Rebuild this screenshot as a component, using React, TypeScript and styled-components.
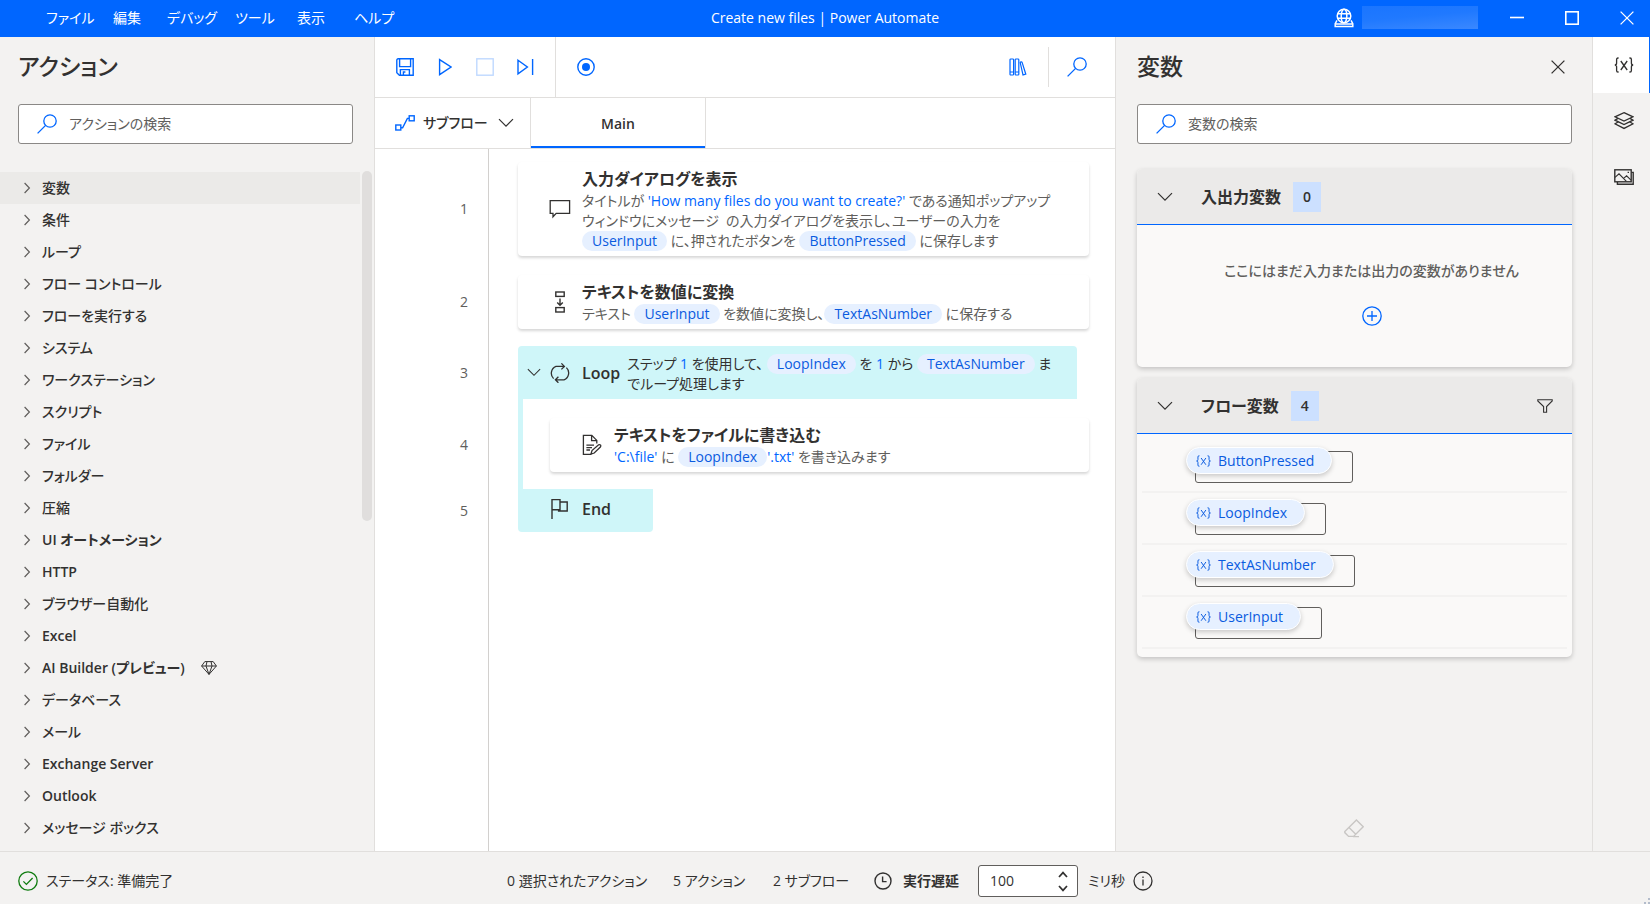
import React from "react";
import styled, { createGlobalStyle } from "styled-components";

const c = {
  blue: "#0066ff",
  panel: "#f3f2f1",
  line: "#e1dfdd",
  text: "#323130",
  sub: "#605e5c",
  pill: "#e6f0ff",
  loop: "#cff6f9",
};

const Global = createGlobalStyle`
  *, *::before, *::after { box-sizing: border-box; }
  body {
    margin: 0;
    color: ${c.text};
    background: ${c.panel};
    font-family: "Open Sans", "Noto Sans CJK JP", sans-serif;
    font-size: 14px;
    line-height: 20px;
    font-feature-settings: "palt";
  }
  button, input {
    font: inherit;
    font-feature-settings: inherit;
    color: inherit;
    margin: 0;
    padding: 0;
    border: 0;
    background: none;
  }
  svg { display: block; flex: none; }
  h1, h2, h3, p, ul, ol { margin: 0; padding: 0; font: inherit; list-style: none; }
`;

/* ---------- icons ---------- */

type IconProps = { size?: number; w?: number; h?: number; box?: string; stroke?: string; sw?: number; children: React.ReactNode };
const Icon = ({ size = 20, w, h, box, stroke = "currentColor", sw = 1.4, children }: IconProps) => (
  <svg
    width={w ?? size}
    height={h ?? size}
    viewBox={box ?? `0 0 ${w ?? size} ${h ?? size}`}
    fill="none"
    stroke={stroke}
    strokeWidth={sw}
    aria-hidden="true"
  >
    {children}
  </svg>
);

const SearchIcon = () => (
  <Icon size={20} stroke={c.blue} sw={1.3}>
    <circle cx="13" cy="7" r="6.2" />
    <path d="M8.6 11.4 0.6 19.4" />
  </Icon>
);
const ChevronDown = ({ w = 16 }: { w?: number }) => (
  <Icon w={w} h={w / 2 + 2} box="0 0 16 10" sw={1.2}>
    <path d="M1 1.2 8 8.2 15 1.2" />
  </Icon>
);
const ChevronRight = () => (
  <Icon w={8} h={12} stroke={c.sub} sw={1.2}>
    <path d="M1.6 1 6.4 6 1.6 11" />
  </Icon>
);
const SaveIcon = () => (
  <Icon size={18}>
    <path d="M0.8 2.2Q0.8 0.8 2.2 0.8H17.2V17.2H3.4L0.8 14.8Z" />
    <path d="M3.6 1V8.6H14.6V1M4.4 17V11.6H13.4V17M7.4 17V14H9.4" />
  </Icon>
);
const PlayIcon = () => (
  <Icon w={14} h={18}>
    <path d="M1.6 1.6 13 9 1.6 16.6Z" />
  </Icon>
);
const StopIcon = () => (
  <Icon size={18} stroke="#bfd9ff">
    <rect x="0.8" y="0.8" width="16.4" height="16.4" />
  </Icon>
);
const StepIcon = () => (
  <Icon w={17} h={18}>
    <path d="M1 2.2 10.4 9 1 15.8ZM15.6 1V17" />
  </Icon>
);
const RecordIcon = () => (
  <Icon size={18}>
    <circle cx="9" cy="9" r="8.2" />
    <circle cx="9" cy="9" r="4" fill={c.blue} stroke="none" />
  </Icon>
);
const LibraryIcon = () => (
  <Icon size={18} sw={1.2}>
    <rect x="1" y="1" width="3.6" height="16" rx="0.8" />
    <rect x="6.2" y="1" width="3.6" height="16" rx="0.8" />
    <path d="M11.2 4.6Q11.4 3.8 12.2 3.8T13.2 4.6L16.8 16.2 14 17ZM1 14H4.6M6.2 14H9.8" />
  </Icon>
);
const SubflowIcon = () => (
  <Icon w={20} h={16}>
    <rect x="0.8" y="10" width="5" height="5" />
    <rect x="14.2" y="0.8" width="5" height="5" />
    <path d="M6 12.8H7.6L12.4 3.4H14" />
  </Icon>
);
const MessageIcon = () => (
  <Icon w={22} h={20} sw={1.3}>
    <path d="M1.2 1.6H20.6V14.4H7.2L4 17.8V14.4H1.2Z" />
  </Icon>
);
const ConvertIcon = () => (
  <Icon w={22} h={22} sw={1.4}>
    <rect x="6.8" y="1" width="8.4" height="4.4" />
    <rect x="6.8" y="16.6" width="8.4" height="4.4" />
    <path d="M11 7.4V14M8.2 11.4 11 14.2 13.8 11.4" />
  </Icon>
);
const LoopIcon = () => (
  <Icon w={22} h={20} sw={1.3}>
    <path d="M4.6 15.6A7.4 7.4 0 0 1 7 3.4H15.4M12.4 0.4 15.4 3.4 12.4 6.4" />
    <path d="M17.4 4.6A7.4 7.4 0 0 1 15 16.8H6.4M9.4 13.8 6.4 16.8 9.4 19.8" />
  </Icon>
);
const WriteIcon = () => (
  <Icon w={22} h={22} sw={1.3}>
    <path d="M10.4 20.4H2.4V1.4H10.8L15.8 6.4V9.4M10.6 1.6V6.6H15.6" />
    <path d="M5.4 11.2H13M5.4 13.6H11M5.4 16H9" />
    <path d="M10 20 11 16.6 17.6 10.8Q18.8 10.2 19.6 11.2 20.2 12.2 19.4 13L13.2 19Z" />
  </Icon>
);
const FlagIcon = () => (
  <Icon w={22} h={22} sw={1.4}>
    <path d="M3 21V1.6H11V11.8H3M11 4H18.2V13H9.6V11.8" />
  </Icon>
);
const DiamondIcon = () => (
  <Icon size={16} sw={1}>
    <path d="M3.8 1.6H12.2L15.4 6 8 14.4 0.6 6ZM0.6 6H15.4M5 6 8 14.4 11 6M5 6 6 1.6M11 6 10 1.6" />
  </Icon>
);
const GlobeIcon = () => (
  <Icon w={20} h={20} sw={1.5}>
    <circle cx="10" cy="8" r="6.8" />
    <ellipse cx="10" cy="8" rx="2.8" ry="6.8" />
    <path d="M3.8 5.8H16.2M3.8 10.2H16.2M3 12.4 1.2 15.6V18.4H18.8V15.6L17 12.4M2 16H18" />
  </Icon>
);
const CloseIcon = ({ size = 14 }: { size?: number }) => (
  <Icon size={size} box="0 0 14 14" sw={1.3}>
    <path d="M0.6 0.6 13.4 13.4M13.4 0.6 0.6 13.4" />
  </Icon>
);
const PlusCircle = () => (
  <Icon size={20} stroke={c.blue} sw={1.3}>
    <circle cx="10" cy="10" r="9.2" />
    <path d="M5 10H15M10 5V15" />
  </Icon>
);
const FilterIcon = () => (
  <Icon w={16} h={14} sw={1.1}>
    <path d="M0.8 0.8H15.2V2L9.6 7.6V13.2H6.6V7.6L0.8 2Z" />
  </Icon>
);
const BracesIcon = ({ w = 20, sw = 1.3 }: { w?: number; sw?: number }) => (
  <Icon w={w} h={w * 0.8} box="0 0 20 16" sw={sw}>
    <path d="M4.6 1H4Q2.6 1 2.6 2.6V6Q2.6 8 0.8 8 2.6 8 2.6 10V13.4Q2.6 15 4 15H4.6" />
    <path d="M15.4 1H16Q17.4 1 17.4 2.6V6Q17.4 8 19.2 8 17.4 8 17.4 10V13.4Q17.4 15 16 15H15.4" />
    <path d="M6.8 4 13.2 13M13.2 4 6.8 13" />
  </Icon>
);
const LayersIcon = () => (
  <Icon size={20} sw={1.3}>
    <path d="M10 1.6 19 5.8 10 10 1 5.8Z" />
    <path d="M4 7.4 1 9.2 10 13.6 19 9.2 16 7.4M4 11 1 12.8 10 17.4 19 12.8 16 11" />
  </Icon>
);
const ImagesIcon = () => (
  <Icon w={20} h={16} sw={1.4}>
    <rect x="0.8" y="0.8" width="16.4" height="12" />
    <path d="M17.4 3.4H19.2V15.2H3.4V13" />
    <path d="M1 8.4 5 4.8 12.4 12.4M9.6 9.4 12.6 6.8 17 11.2M13.6 3.4H15" strokeWidth="1.1" />
  </Icon>
);
const EraserIcon = () => (
  <Icon size={20} stroke="#c8c6c4" sw={1.4}>
    <path d="M12.4 1 19.2 7.8 9.6 17.4H4.6L0.8 13.6V12.6ZM5 8.4 12 15.4M9 17.6H15" />
  </Icon>
);
const CheckIcon = () => (
  <Icon size={20} stroke="#107c10" sw={1.3}>
    <circle cx="10" cy="10" r="9.2" />
    <path d="M5.4 10.4 8.4 13.4 14.6 7" />
  </Icon>
);
const ClockIcon = () => (
  <Icon size={18} sw={1.4}>
    <circle cx="9" cy="9" r="8" />
    <path d="M8.6 4.6V9.6H12.6" />
  </Icon>
);
const InfoIcon = () => (
  <Icon size={20} sw={1.3}>
    <circle cx="10" cy="10" r="9" />
    <path d="M10 8.6V14.6M10 5.4V7" />
  </Icon>
);

/* ---------- shell ---------- */

const Shell = styled.div`
  display: grid;
  grid-template: 37px minmax(0, 1fr) 53px / 375px minmax(0, 1fr) 477px 57px;
  height: 100vh;
`;

const TitleBar = styled.header`
  grid-column: 1 / -1;
  display: grid;
  grid-template-columns: 1fr auto 1fr;
  align-items: center;
  padding-bottom: 2px;
  background: ${c.blue};
  color: #fff;
`;
const Menu = styled.nav`
  display: grid;
  grid-template-columns: 67px 54px 68px 62px 57px auto;
  justify-content: start;
  padding-left: 46px;
  button { text-align: left; }
`;
const WindowTools = styled.div`
  display: flex;
  align-items: center;
  justify-content: flex-end;
  padding-right: 16px;
`;
const Account = styled.div`
  width: 116px;
  height: 23px;
  margin: 0 32px 0 8px;
  background: linear-gradient(175deg, #1a75ff, #2079ff 45%, #3a88ff);
`;
const WindowButton = styled.button`
  display: grid;
  place-items: center;
  width: 14px;
  height: 20px;
  margin-left: 41px;
  &:first-of-type { margin-left: 0; }
`;

/* ---------- side panels ---------- */

const Panel = styled.section`
  display: flex;
  flex-direction: column;
  min-height: 0;
  background: ${c.panel};
  border-right: 1px solid ${c.line};
`;
const PanelHead = styled.div`
  display: flex;
  align-items: center;
  justify-content: space-between;
  padding: 14px 27px 13px 18px;
`;
const PanelTitle = styled.h2`
  font-size: 23px;
  line-height: 30px;
  padding-bottom: 2px;
  font-weight: 500;
`;
const VarTitle = styled(PanelTitle)`
  padding-left: 3px;
`;
const IconButton = styled.button`
  display: grid;
  place-items: center;
`;
const SearchBox = styled.label`
  display: flex;
  align-items: center;
  gap: 12px;
  height: 40px;
  margin: 8px 21px 0 18px;
  padding: 0 18px;
  background: #fff;
  border: 1px solid #8a8886;
  border-radius: 3px;
  input {
    flex: 1;
    min-width: 0;
    outline: none;
  }
  input::placeholder { color: ${c.sub}; opacity: 1; }
`;
const VarSearch = styled(SearchBox)`
  margin: 8px 20px 25px 21px;
`;

const ListArea = styled.div`
  display: flex;
  flex: 1;
  gap: 2px;
  min-height: 0;
  margin-top: 27px;
  padding-right: 2px;
`;
const ActionList = styled.ul`
  flex: 1;
  padding-top: 1px;
  overflow: hidden;
`;
const ActionItem = styled.button<{ $active?: boolean; $latin?: boolean }>`
  display: flex;
  align-items: center;
  gap: 11px;
  width: 100%;
  height: 32px;
  padding-left: 23px;
  font-weight: ${(p) => (p.$latin ? 600 : 500)};
  text-align: left;
  background: ${(p) => (p.$active ? "#ebeae8" : "transparent")};
  svg:last-child:not(:first-child) { margin-left: 5px; }
`;
const ScrollThumb = styled.div`
  width: 10px;
  height: 350px;
  border-radius: 5px;
  background: #e0dedd;
`;

/* ---------- designer ---------- */

const Designer = styled.main`
  display: flex;
  flex-direction: column;
  min-height: 0;
  background: #fff;
  border-right: 1px solid ${c.line};
`;
const Toolbar = styled.div`
  display: flex;
  height: 61px;
  color: ${c.blue};
  border-bottom: 1px solid ${c.line};
`;
const RunTools = styled.div`
  display: grid;
  grid-template-columns: repeat(4, 40px);
  width: 181px;
  padding-left: 10px;
  border-right: 1px solid ${c.line};
`;
const RecordTool = styled.div`
  display: grid;
  flex: 1;
  justify-content: start;
  padding-left: 21px;
`;
const LibraryTool = styled.div`
  display: grid;
  align-self: center;
  height: 40px;
  padding-right: 21px;
  border-right: 1px solid ${c.line};
`;
const FindTool = styled.div`
  display: grid;
  padding: 0 28px 0 18px;
`;
const Tabs = styled.div`
  display: flex;
  height: 51px;
  border-bottom: 1px solid ${c.line};
`;
const SubflowButton = styled.button`
  display: flex;
  align-items: center;
  width: 156px;
  padding-left: 20px;
  gap: 8px;
  font-weight: 500;
  white-space: nowrap;
  border-right: 1px solid ${c.line};
  svg:first-child { color: ${c.blue}; }
  svg:last-child { margin-left: auto; margin-right: 16px; }
`;
const Tab = styled.button`
  width: 175px;
  padding-top: 2px;
  font-weight: 600;
  border-right: 1px solid ${c.line};
  box-shadow: inset 0 -2px ${c.blue};
`;

const Steps = styled.ol`
  display: flex;
  flex: 1;
  flex-direction: column;
  min-height: 0;
`;
const Step = styled.li<{ $top?: number; $bottom?: number; $fill?: boolean }>`
  display: grid;
  grid-template-columns: 114px minmax(0, 1fr);
  flex: ${(p) => (p.$fill ? "1" : "none")};
  > * {
    padding-top: ${(p) => p.$top ?? 0}px;
    padding-bottom: ${(p) => p.$bottom ?? 0}px;
  }
`;
const StepNumber = styled.div`
  display: flex;
  align-items: center;
  justify-content: flex-end;
  padding-right: 20px;
  color: ${c.sub};
  border-right: 1px solid #d2d0ce;
`;
const StepBody = styled.div<{ $nested?: boolean }>`
  margin-left: 29px;
  padding-left: ${(p) => (p.$nested ? 27 : 0)}px;
  padding-right: 26px;
  border-left: ${(p) => (p.$nested ? `5px solid ${c.loop}` : "0")};
`;
const Card = styled.article`
  display: flex;
  align-items: center;
  gap: 11px;
  padding: 5px 20px 5px 31px;
  background: #fff;
  border-radius: 4px;
  box-shadow: 0 2px 3px rgba(0, 0, 0, 0.16);
`;
const CardTitle = styled.h3`
  font-size: 16px;
  line-height: 24px;
  font-weight: 600;
`;
const Description = styled.p`
  color: ${c.sub};
  white-space: nowrap;
`;
const Line = styled.span`
  display: block;
`;
const Value = styled.span`
  color: ${c.blue};
`;
const Pill = styled.span`
  display: inline-block;
  padding: 0 10px;
  color: #0a5be0;
  background: ${c.pill};
  border-radius: 10px;
`;
const LoopHeader = styled.article`
  display: flex;
  align-items: center;
  height: 53px;
  margin-right: 12px;
  padding-left: 9px;
  background: ${c.loop};
  border-radius: 4px 4px 0 0;
  svg + svg { margin: 0 11px 0 8px; }
  h3 { margin-right: 7px; }
  p { padding-top: 2px; color: ${c.text}; }
`;
const LoopEnd = styled.article`
  display: flex;
  align-items: center;
  gap: 11px;
  width: 135px;
  height: 43px;
  padding: 0 0 4px 31px;
  background: ${c.loop};
  border-radius: 0 0 4px 4px;
`;

/* ---------- variables ---------- */

const VarCard = styled.section`
  margin: 0 20px 11px 21px;
  background: #faf9f8;
  border-radius: 5px;
  box-shadow: 0 2px 5px rgba(0, 0, 0, 0.2);
  overflow: hidden;
`;
const VarHead = styled.div`
  display: flex;
  align-items: center;
  height: 56px;
  padding: 0 19px 0 20px;
  background: #ebeae9;
  border-bottom: 1px solid ${c.blue};
  h3 { margin: 0 12px 0 28px; }
  > :last-child:not(span) { margin-left: auto; }
`;
const Count = styled.span`
  display: grid;
  place-items: center;
  width: 28px;
  height: 30px;
  font-weight: 600;
  background: #cce0ff;
`;
const Empty = styled.div`
  display: flex;
  flex-direction: column;
  align-items: center;
  gap: 25px;
  height: 142px;
  padding: 36px 0 0 34px;
  color: ${c.sub};
  font-weight: 500;
`;
const VarList = styled.ul`
  padding: 7px 5px 8px;
`;
const VarRow = styled.li`
  display: flex;
  height: 52px;
  padding: 6px 0 0 44px;
  border-bottom: 2px solid #f3f2f1;
`;
const VarSlot = styled.div`
  position: relative;
  height: 27px;
  &::before {
    content: "";
    position: absolute;
    inset: 4px -21px -9px 9px;
    border: 1px solid ${c.sub};
    border-radius: 3px;
  }
`;
const VarPill = styled.button`
  position: relative;
  display: flex;
  align-items: center;
  gap: 7px;
  height: 27px;
  padding: 0 17px 0 9px;
  color: #0a5be0;
  background: ${c.pill};
  border: 1px solid #fff;
  border-radius: 14px;
  box-shadow: 0 2px 5px rgba(0, 0, 0, 0.2);
`;
const PanelFoot = styled.div`
  display: flex;
  justify-content: center;
  margin-top: auto;
  padding-bottom: 12px;
`;

const Rail = styled.nav`
  background: ${c.panel};
`;
const RailButton = styled.button<{ $active?: boolean }>`
  display: grid;
  place-items: center;
  width: 100%;
  height: 56px;
  padding-left: 4px;
  background: ${(p) => (p.$active ? "#fff" : "transparent")};
  box-shadow: ${(p) => (p.$active ? `inset -1px 0 ${c.blue}` : "none")};
`;

/* ---------- status bar ---------- */

const StatusBar = styled.footer`
  grid-column: 1 / -1;
  display: flex;
  align-items: center;
  padding: 6px 18px 0;
  background: ${c.panel};
  border-top: 1px solid ${c.line};
`;
const Status = styled.div`
  display: flex;
  align-items: center;
  gap: 8px;
  width: 489px;
`;
const Counter = styled.span<{ $w: number }>`
  width: ${(p) => p.$w}px;
  white-space: nowrap;
`;
const DelayLabel = styled.label`
  width: 75px;
  margin-left: 11px;
  font-weight: 600;
`;
const Spinner = styled.div`
  display: flex;
  width: 100px;
  height: 32px;
  padding: 0 9px 0 11px;
  background: #fff;
  border: 1px solid ${c.sub};
  border-radius: 3px;
  input {
    flex: 1;
    min-width: 0;
    appearance: textfield;
    outline: none;
  }
  input::-webkit-inner-spin-button { display: none; }
`;
const SpinButtons = styled.div`
  display: grid;
  align-content: center;
  gap: 7px;
`;
const Unit = styled.span`
  margin: 0 8px 0 10px;
`;
const Grip = styled.div`
  align-self: flex-end;
  margin: 0 -18px 0 auto;
  color: #b3bccb;
`;

const actions = [
  "変数", "条件", "ループ", "フロー コントロール", "フローを実行する", "システム", "ワークステーション",
  "スクリプト", "ファイル", "フォルダー", "圧縮", "UI オートメーション", "HTTP", "ブラウザー自動化", "Excel",
  "AI Builder (プレビュー)", "データベース", "メール", "Exchange Server", "Outlook", "メッセージ ボックス",
];
const variables = ["ButtonPressed", "LoopIndex", "TextAsNumber", "UserInput"];

export default function App() {
  return (
    <Shell>
      <Global />
      <TitleBar>
        <Menu>
          {["ファイル", "編集", "デバッグ", "ツール", "表示", "ヘルプ"].map((m) => (
            <button key={m}>{m}</button>
          ))}
        </Menu>
        <h1>Create new files | Power Automate</h1>
        <WindowTools>
          <GlobeIcon />
          <Account />
          <WindowButton aria-label="最小化">
            <Icon size={14} sw={1.6}><path d="M0 6.5H14" /></Icon>
          </WindowButton>
          <WindowButton aria-label="最大化">
            <Icon size={14} sw={1.6}><rect x="0.8" y="0.8" width="12.4" height="12.4" /></Icon>
          </WindowButton>
          <WindowButton aria-label="閉じる"><CloseIcon /></WindowButton>
        </WindowTools>
      </TitleBar>

      <Panel>
        <PanelHead><PanelTitle>アクション</PanelTitle></PanelHead>
        <SearchBox>
          <SearchIcon />
          <input aria-label="アクションの検索" placeholder="アクションの検索" />
        </SearchBox>
        <ListArea>
          <ActionList>
            {actions.map((a, i) => (
              <li key={a}>
                <ActionItem $active={i === 0} $latin={/^[A-Z]/.test(a)}>
                  <ChevronRight />
                  <span>{a}</span>
                  {a.startsWith("AI") && <DiamondIcon />}
                </ActionItem>
              </li>
            ))}
          </ActionList>
          <ScrollThumb />
        </ListArea>
      </Panel>

      <Designer>
        <Toolbar>
          <RunTools>
            <IconButton aria-label="保存"><SaveIcon /></IconButton>
            <IconButton aria-label="実行"><PlayIcon /></IconButton>
            <IconButton aria-label="停止" disabled><StopIcon /></IconButton>
            <IconButton aria-label="次のアクションを実行"><StepIcon /></IconButton>
          </RunTools>
          <RecordTool><IconButton aria-label="レコーダー"><RecordIcon /></IconButton></RecordTool>
          <LibraryTool><IconButton aria-label="ライブラリ"><LibraryIcon /></IconButton></LibraryTool>
          <FindTool><IconButton aria-label="検索"><SearchIcon /></IconButton></FindTool>
        </Toolbar>
        <Tabs>
          <SubflowButton><SubflowIcon />サブフロー<ChevronDown /></SubflowButton>
          <Tab>Main</Tab>
        </Tabs>
        <Steps>
          <Step $top={13} $bottom={10}>
            <StepNumber>1</StepNumber>
            <StepBody>
              <Card>
                <MessageIcon />
                <div>
                  <CardTitle>入力ダイアログを表示</CardTitle>
                  <Description>
                    <Line>タイトルが <Value>'How many files do you want to create?'</Value> である通知ポップアップ</Line>
                    <Line>ウィンドウにメッセージ&nbsp; の入力ダイアログを表示し、ユーザーの入力を</Line>
                    <Line><Pill>UserInput</Pill> に、押されたボタンを <Pill>ButtonPressed</Pill> に保存します</Line>
                  </Description>
                </div>
              </Card>
            </StepBody>
          </Step>
          <Step $top={9} $bottom={10}>
            <StepNumber>2</StepNumber>
            <StepBody>
              <Card>
                <ConvertIcon />
                <div>
                  <CardTitle>テキストを数値に変換</CardTitle>
                  <Description>
                    テキスト <Pill>UserInput</Pill> を数値に変換し、<Pill>TextAsNumber</Pill> に保存する
                  </Description>
                </div>
              </Card>
            </StepBody>
          </Step>
          <Step $top={7}>
            <StepNumber>3</StepNumber>
            <StepBody>
              <LoopHeader>
                <ChevronDown w={14} />
                <LoopIcon />
                <CardTitle>Loop</CardTitle>
                <Description>
                  <Line>
                    ステップ <Value>1</Value> を使用して、 <Pill>LoopIndex</Pill> を <Value>1</Value> から <Pill>TextAsNumber</Pill> ま
                  </Line>
                  <Line>でループ処理します</Line>
                </Description>
              </LoopHeader>
            </StepBody>
          </Step>
          <Step $top={19} $bottom={17}>
            <StepNumber>4</StepNumber>
            <StepBody $nested>
              <Card>
                <WriteIcon />
                <div>
                  <CardTitle>テキストをファイルに書き込む</CardTitle>
                  <Description>
                    <Value>'C:\file'</Value> に <Pill>LoopIndex</Pill><Value>'.txt'</Value> を書き込みます
                  </Description>
                </div>
              </Card>
            </StepBody>
          </Step>
          <Step>
            <StepNumber>5</StepNumber>
            <StepBody>
              <LoopEnd><FlagIcon /><CardTitle>End</CardTitle></LoopEnd>
            </StepBody>
          </Step>
          <Step $fill aria-hidden="true"><StepNumber /></Step>
        </Steps>
      </Designer>

      <Panel>
        <PanelHead>
          <VarTitle>変数</VarTitle>
          <IconButton aria-label="閉じる"><CloseIcon /></IconButton>
        </PanelHead>
        <VarSearch>
          <SearchIcon />
          <input aria-label="変数の検索" placeholder="変数の検索" />
        </VarSearch>
        <VarCard>
          <VarHead>
            <ChevronDown />
            <CardTitle>入出力変数</CardTitle>
            <Count>0</Count>
          </VarHead>
          <Empty>
            <p>ここにはまだ入力または出力の変数がありません</p>
            <IconButton aria-label="追加"><PlusCircle /></IconButton>
          </Empty>
        </VarCard>
        <VarCard>
          <VarHead>
            <ChevronDown />
            <CardTitle>フロー変数</CardTitle>
            <Count>4</Count>
            <IconButton aria-label="フィルター"><FilterIcon /></IconButton>
          </VarHead>
          <VarList>
            {variables.map((v) => (
              <VarRow key={v}>
                <VarSlot>
                  <VarPill><BracesIcon w={15} />{v}</VarPill>
                </VarSlot>
              </VarRow>
            ))}
          </VarList>
        </VarCard>
        <PanelFoot><IconButton aria-label="消去"><EraserIcon /></IconButton></PanelFoot>
      </Panel>

      <Rail>
        <RailButton $active aria-label="変数"><BracesIcon /></RailButton>
        <RailButton aria-label="UI 要素"><LayersIcon /></RailButton>
        <RailButton aria-label="画像"><ImagesIcon /></RailButton>
      </Rail>

      <StatusBar>
        <Status><CheckIcon />ステータス: 準備完了</Status>
        <Counter $w={166}>0 選択されたアクション</Counter>
        <Counter $w={100}>5 アクション</Counter>
        <Counter $w={101}>2 サブフロー</Counter>
        <ClockIcon />
        <DelayLabel htmlFor="delay">実行遅延</DelayLabel>
        <Spinner>
          <input id="delay" type="number" defaultValue={100} />
          <SpinButtons>
            <IconButton aria-label="増やす"><Icon w={10} h={7} sw={1.7}><path d="M1 6 5 1.6 9 6" /></Icon></IconButton>
            <IconButton aria-label="減らす"><Icon w={10} h={7} sw={1.7}><path d="M1 1 5 5.4 9 1" /></Icon></IconButton>
          </SpinButtons>
        </Spinner>
        <Unit>ミリ秒</Unit>
        <InfoIcon />
        <Grip>
          <Icon size={6} sw={0}><path fill="currentColor" d="M4 0H6V2H4ZM4 4H6V6H4ZM0 4H2V6H0Z" /></Icon>
        </Grip>
      </StatusBar>
    </Shell>
  );
}
